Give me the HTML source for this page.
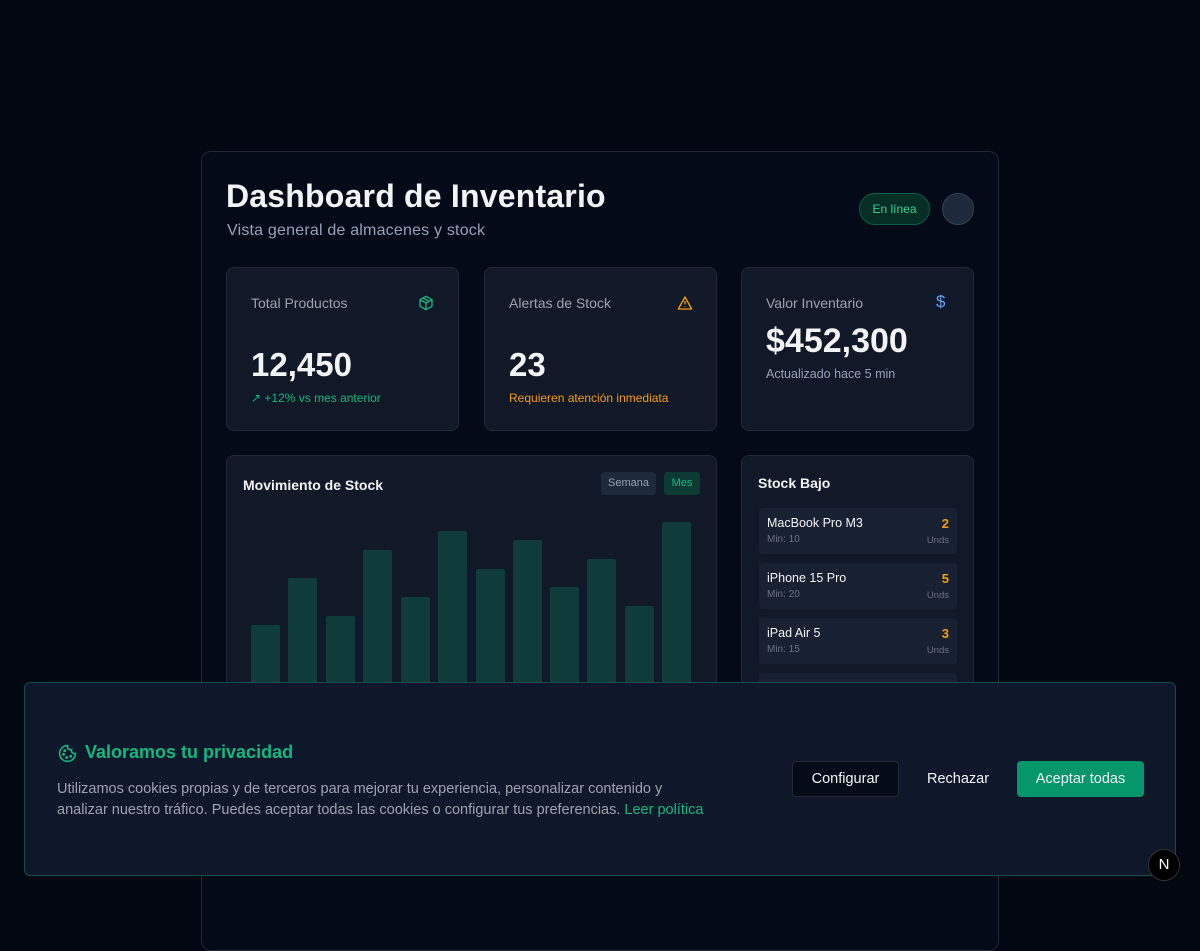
<!DOCTYPE html>
<html><head><meta charset="utf-8"><style>
*{box-sizing:border-box;margin:0;padding:0}
body{width:1200px;height:900px;background:#030712;font-family:"Liberation Sans",sans-serif;position:relative;overflow:hidden;color:#f3f4f6}
.abs{position:absolute}
.panel{left:201px;top:151px;width:798px;height:800px;border:1px solid #1f2937;border-radius:10px;background:#050a18}
.card{background:#111827;border:1px solid #1f2937;border-radius:8px}
.lbl{font-size:14px;color:#9ca3af}
.bar{position:absolute;width:29px;background:#0f3b3a;border-radius:2px 2px 0 0;bottom:0}
.item{position:absolute;left:17px;width:198px;height:46px;background:#182132;border-radius:4px}
.item .n{position:absolute;left:8px;top:8px;font-size:12.5px;color:#f3f4f6}
.item .m{position:absolute;left:8px;top:26px;font-size:10px;color:#6b7280}
.item .q{position:absolute;right:8px;top:8px;font-size:13px;font-weight:bold;color:#f59e0b}
.item .u{position:absolute;right:8px;top:27px;font-size:9.5px;color:#6b7280}
</style></head><body>
<div class="abs panel">
  <div class="abs" style="left:24px;top:26px;font-size:32px;font-weight:bold;color:#f3f4f6;letter-spacing:0.2px">Dashboard de Inventario</div>
  <div class="abs" style="left:25px;top:70px;font-size:16px;color:#94a3b8;letter-spacing:0.2px">Vista general de almacenes y stock</div>
  <div class="abs" style="left:657px;top:41px;width:71px;height:32px;border-radius:16px;background:#052e24;border:1px solid #065f46;color:#34d399;font-size:12px;text-align:center;line-height:30px">En línea</div>
  <div class="abs" style="left:740px;top:41px;width:32px;height:32px;border-radius:50%;background:#1e293b;border:1px solid #334155"></div>

  <div class="abs card" style="left:24px;top:115px;width:233px;height:164px">
    <div class="abs lbl" style="left:24px;top:27px">Total Productos</div>
    <svg class="abs" style="left:191px;top:27px" width="16" height="16" viewBox="0 0 24 24" fill="none" stroke="#10b981" stroke-width="2" stroke-linejoin="round"><path d="M12 2l9 5v10l-9 5-9-5V7z M3 7l9 5 9-5 M12 12v10 M7.5 4.5l9 5"/></svg>
    <div class="abs" style="left:24px;top:78px;font-size:33px;font-weight:bold">12,450</div>
    <div class="abs" style="left:24px;top:123px;font-size:12px;color:#10b981">↗ +12% vs mes anterior</div>
  </div>
  <div class="abs card" style="left:282px;top:115px;width:233px;height:164px">
    <div class="abs lbl" style="left:24px;top:27px">Alertas de Stock</div>
    <svg class="abs" style="left:192px;top:27px" width="16" height="16" viewBox="0 0 24 24" fill="none" stroke="#f59e0b" stroke-width="2" stroke-linejoin="round"><path d="M12 3L2 21h20z M12 9v5 M12 17v1"/></svg>
    <div class="abs" style="left:24px;top:78px;font-size:33px;font-weight:bold">23</div>
    <div class="abs" style="left:24px;top:123px;font-size:12px;color:#f59e0b">Requieren atención inmediata</div>
  </div>
  <div class="abs card" style="left:539px;top:115px;width:233px;height:164px">
    <div class="abs lbl" style="left:24px;top:27px">Valor Inventario</div>
    <div class="abs" style="left:194px;top:24px;font-size:17px;color:#60a5fa">$</div>
    <div class="abs" style="left:24px;top:54px;font-size:34px;font-weight:bold">$452,300</div>
    <div class="abs" style="left:24px;top:99px;font-size:12.5px;color:#94a3b8">Actualizado hace 5 min</div>
  </div>

  <div class="abs card" style="left:24px;top:303px;width:491px;height:400px">
    <div class="abs" style="left:16px;top:21px;font-size:14px;font-weight:bold">Movimiento de Stock</div>
    <div class="abs" style="left:374px;top:16px;width:55px;height:23px;background:#1e293b;border-radius:3px;font-size:11px;color:#94a3b8;text-align:center;line-height:23px">Semana</div>
    <div class="abs" style="left:437px;top:16px;width:36px;height:23px;background:#0c3b34;border-radius:3px;font-size:11px;color:#10b981;text-align:center;line-height:23px">Mes</div>
    <div class="abs" style="left:0;top:0;width:489px;height:380px">
      <div class="bar" style="left:24px;top:169px"></div>
      <div class="bar" style="left:61px;top:122px"></div>
      <div class="bar" style="left:99px;top:160px"></div>
      <div class="bar" style="left:136px;top:94px"></div>
      <div class="bar" style="left:174px;top:141px"></div>
      <div class="bar" style="left:211px;top:75px"></div>
      <div class="bar" style="left:249px;top:113px"></div>
      <div class="bar" style="left:286px;top:84px"></div>
      <div class="bar" style="left:323px;top:131px"></div>
      <div class="bar" style="left:360px;top:103px"></div>
      <div class="bar" style="left:398px;top:150px"></div>
      <div class="bar" style="left:435px;top:66px"></div>
    </div>
  </div>

  <div class="abs card" style="left:539px;top:303px;width:233px;height:400px">
    <div class="abs" style="left:16px;top:19px;font-size:14px;font-weight:bold">Stock Bajo</div>
    <div class="item" style="top:52px"><div class="n">MacBook Pro M3</div><div class="m">Min: 10</div><div class="q">2</div><div class="u">Unds</div></div>
    <div class="item" style="top:107px"><div class="n">iPhone 15 Pro</div><div class="m">Min: 20</div><div class="q">5</div><div class="u">Unds</div></div>
    <div class="item" style="top:162px"><div class="n">iPad Air 5</div><div class="m">Min: 15</div><div class="q">3</div><div class="u">Unds</div></div>
    <div class="item" style="top:217px"></div>
  </div>
</div>

<div class="abs" style="left:24px;top:682px;width:1152px;height:194px;background:#0f172a;border:1px solid #134e4a;border-radius:6px">
  <svg class="abs" style="left:33px;top:61px" width="19" height="19" viewBox="0 0 24 24" fill="none" stroke="#10b981" stroke-width="2"><path d="M12 2a10 10 0 1 0 10 10 4 4 0 0 1-5-5 4 4 0 0 1-5-5z"/><circle cx="8.5" cy="8.5" r=".8" fill="#10b981"/><circle cx="16" cy="15.5" r=".8" fill="#10b981"/><circle cx="11" cy="17" r=".8" fill="#10b981"/><circle cx="7" cy="13" r=".8" fill="#10b981"/></svg>
  <div class="abs" style="left:60px;top:59px;font-size:18px;font-weight:bold;color:#10b981">Valoramos tu privacidad</div>
  <div class="abs" style="left:32px;top:96px;width:660px;font-size:14.5px;line-height:21px;color:#9ca3af">Utilizamos cookies propias y de terceros para mejorar tu experiencia, personalizar contenido y analizar nuestro tráfico. Puedes aceptar todas las cookies o configurar tus preferencias. <span style="color:#10b981">Leer política</span></div>
  <div class="abs" style="left:767px;top:78px;width:107px;height:36px;background:#060b18;border:1px solid #1f2937;border-radius:4px;font-size:14.5px;color:#f3f4f6;text-align:center;line-height:34px">Configurar</div>
  <div class="abs" style="left:888px;top:78px;width:90px;height:36px;font-size:14.5px;color:#f3f4f6;text-align:center;line-height:36px">Rechazar</div>
  <div class="abs" style="left:992px;top:78px;width:127px;height:36px;background:#059669;border-radius:4px;font-size:14.5px;color:#f3f4f6;text-align:center;line-height:36px">Aceptar todas</div>
</div>
<div class="abs" style="left:1148px;top:849px;width:32px;height:32px;border-radius:50%;background:#000;border:1px solid #333;color:#fff;font-size:15px;text-align:center;line-height:30px">N</div>
</body></html>
